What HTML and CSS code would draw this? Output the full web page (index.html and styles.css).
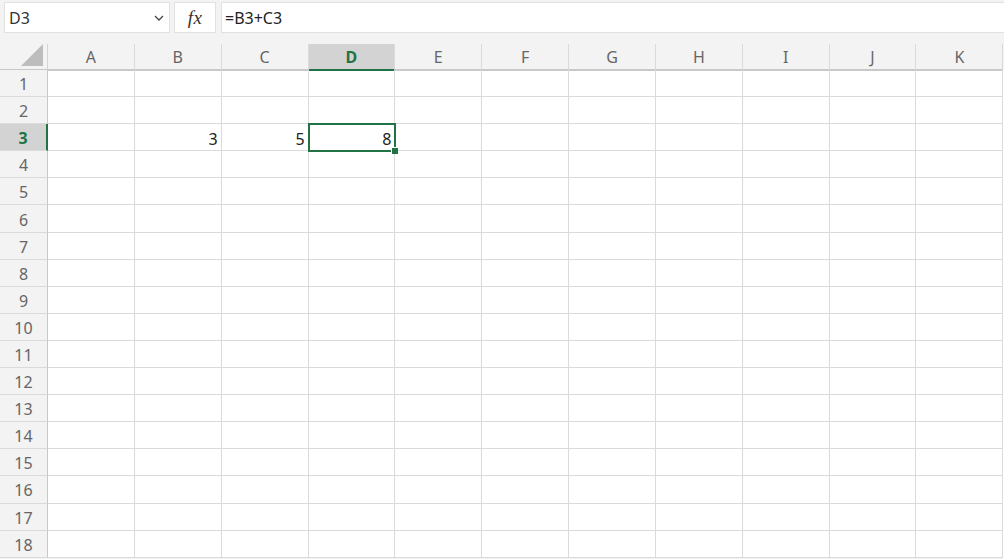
FILE: index.html
```html
<!DOCTYPE html>
<html>
<head>
<meta charset="utf-8">
<link rel="stylesheet" href="styles.css">
</head>
<body>
<div class="app">
  <div class="fbar">
    <div class="namebox"><span class="ref">D3</span><svg class="chev" width="10" height="6" viewBox="0 0 10 6"><path d="M1 1 L5 5 L9 1" fill="none" stroke="#444" stroke-width="1.3"/></svg></div>
    <div class="fxbox"><span class="fx">fx</span></div>
    <div class="formula">=B3+C3</div>
  </div>
  <div class="sheet">
    <div class="corner"><svg width="18" height="18" viewBox="0 0 18 18"><polygon points="18,0 18,18 0,18" fill="#bdbdbd"/></svg></div>
    <div class="ch">A</div><div class="ch">B</div><div class="ch">C</div><div class="ch sel">D</div><div class="ch">E</div><div class="ch">F</div><div class="ch">G</div><div class="ch">H</div><div class="ch">I</div><div class="ch">J</div><div class="ch">K</div>
  </div>
  <div class="grid" id="grid"></div>
</div>
<script src="app.js"></script>
</body>
</html>
```
FILE: app.js
```js
const grid = document.getElementById('grid');
const vals = {3: {1: '3', 2: '5', 3: '8'}};
let html = '';
for (let r = 1; r <= 18; r++) {
  html += '<div class="rh' + (r === 3 ? ' sel' : '') + '">' + r + '</div>';
  for (let c = 0; c < 11; c++) {
    const v = (vals[r] && vals[r][c]) || '';
    let cls = 'cell';
    if (r === 3 && c === 3) cls += ' active';
    html += '<div class="' + cls + '">' + v + (r === 3 && c === 3 ? '<span class="handle"></span>' : '') + '</div>';
  }
}
grid.innerHTML = html;
```
FILE: styles.css
```css
html, body { margin: 0; padding: 0; }
body {
  background: #f3f3f3;
  font-family: "Segoe UI", "Noto Sans", "Open Sans", sans-serif;
  width: 1004px;
  height: 559px;
  overflow: hidden;
}
.app { width: 1004px; }
.fbar {
  display: flex;
  align-items: stretch;
  height: 31px;
  padding: 2px 0 0 4px;
  gap: 4px;
}
.namebox, .fxbox, .formula {
  background: #fff;
  border: 1px solid #e1e1e1;
  box-sizing: border-box;
  height: 31px;
}
.namebox {
  width: 166px;
  display: flex;
  align-items: center;
  justify-content: space-between;
  padding: 0 5px 0 4px;
  font-size: 16px;
  color: #333;
}
.chev { margin-top: 1px; }
.fxbox {
  width: 42px;
  display: flex;
  align-items: center;
  justify-content: center;
}
.fx {
  font-family: "Liberation Serif", "DejaVu Serif", serif;
  font-style: italic;
  font-size: 19px;
  color: #333;
  letter-spacing: 0.5px;
}
.formula {
  flex: 1;
  margin-left: 1px;
  border-right: none;
  display: flex;
  align-items: center;
  padding-left: 3px;
  font-size: 16px;
  color: #222;
}
.sheet {
  display: grid;
  grid-template-columns: 48px repeat(11, 86.85px);
  height: 26px;
  margin-top: 11px;
}
.corner {
  display: flex;
  align-items: flex-end;
  justify-content: flex-end;
  padding: 0 4px 3px 0;
  border-right: 1px solid #d4d4d4;
  border-bottom: 2px solid #c8c8c8;
  box-sizing: border-box;
}
.corner svg { display: block; width: 22px; height: 22px; }
.ch {
  display: flex;
  align-items: center;
  justify-content: center;
  font-size: 16px;
  color: #666;
  border-right: 1px solid #dadada;
  border-bottom: 2px solid #c8c8c8;
  box-sizing: border-box;
  padding-top: 1px;
}
.ch.sel {
  background: #d3d3d3;
  color: #217346;
  font-weight: bold;
  border-bottom: 2px solid #217346;
}
.grid {
  display: grid;
  grid-template-columns: 48px repeat(11, 86.85px);
  grid-auto-rows: 27.1px;
  background: #fff;
}
.rh {
  background: #f3f3f3;
  display: flex;
  align-items: center;
  justify-content: center;
  font-size: 16px;
  color: #666;
  border-right: 1px solid #c8c8c8;
  border-bottom: 1px solid #dadada;
  box-sizing: border-box;
  padding-top: 2px;
}
.rh.sel {
  background: #d3d3d3;
  color: #217346;
  font-weight: bold;
  border-right: 2px solid #217346;
}
.cell {
  border-right: 1px solid #dadada;
  border-bottom: 1px solid #dadada;
  box-sizing: border-box;
  display: flex;
  align-items: center;
  justify-content: flex-end;
  padding: 3px 3px 0 0;
  font-size: 16px;
  color: #222;
  position: relative;
}
.cell.active {
  outline: 2px solid #217346;
  outline-offset: -1px;
  z-index: 2;
}
.handle {
  position: absolute;
  right: -4px;
  bottom: -4px;
  width: 6px;
  height: 6px;
  background: #217346;
  border: 1px solid #fff;
  border-right: none;
  border-bottom: none;
}
```
